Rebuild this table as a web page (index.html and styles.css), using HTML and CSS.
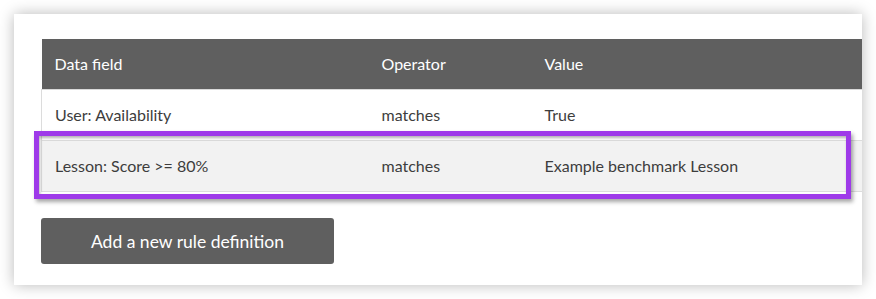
FILE: index.html
```html
<!DOCTYPE html>
<html lang="en">
<head>
    <meta charset="UTF-8">
    <title>Rule definitions</title>

    <link rel="stylesheet" href="styles.css">
</head>
<body>

<div class="card">
    <div class="rules">
        <table class="table">
            <colgroup>
                <col class="table__field">
                <col class="table__operator">
                <col>
            </colgroup>
            <thead>
                <tr>
                    <th>Data field</th>
                    <th>Operator</th>
                    <th>Value</th>
                </tr>
            </thead>
            <tbody>
                <tr>
                    <td>User: Availability</td>
                    <td>matches</td>
                    <td>True</td>
                </tr>
                <tr class="table__row--alt">
                    <td>Lesson: Score &gt;= 80%</td>
                    <td>matches</td>
                    <td>Example benchmark Lesson</td>
                </tr>
            </tbody>
        </table>

        <!-- highlight frame over the second rule -->
        <div class="highlight"></div>
    </div>

    <button type="button" class="btn">Add a new rule definition</button>
</div>

</body>
</html>
```

FILE: styles.css
```css
html, body{
    margin: 0;
    background-color: #fff;
}
body{
    padding: 14px;
    font-family: Lato, "Open Sans", sans-serif;
}
.card{
    width: 821px;
    height: 246px;
    padding: 25px 0 0 27px;
    background-color: #fff;
    box-shadow: 0 0 14px rgba(0, 0, 0, .28);
}
.rules{
    position: relative;
}
.table{
    width: 821px;
    border-collapse: collapse;
    table-layout: fixed;
    font-size: 16px;
    color: #3d3d3d;
}
.table__field{
    width: 327px;
}
.table__operator{
    width: 163px;
}
.table th{
    height: 49px;
    padding: 0 13px 1px;
    background-color: #5f5f5f;
    color: #fff;
    font-weight: normal;
    text-align: left;
    border-bottom: 1px solid #d9d9d9;
}
.table td{
    height: 49px;
    padding: 0 13px 1px;
    border-bottom: 1px solid #dcdcdc;
}
.table td:first-child{
    border-left: 1px solid #dcdcdc;
}
.table__row--alt td{
    background-color: #f2f2f2;
}
.highlight{
    position: absolute;
    left: -7px;
    top: 92px;
    width: 807px;
    height: 58px;
    border: 5px solid #9e3ae9;
    box-shadow: 2px 3px 4px rgba(0, 0, 0, .35), inset 1px 2px 3px rgba(0, 0, 0, .3);
}
.btn{
    display: block;
    width: 293px;
    height: 46px;
    margin-top: 26px;
    border: none;
    border-radius: 3px;
    background-color: #5f5f5f;
    color: #fff;
    font-family: Lato, "Open Sans", sans-serif;
    font-size: 17.5px;
    cursor: pointer;
}
```
